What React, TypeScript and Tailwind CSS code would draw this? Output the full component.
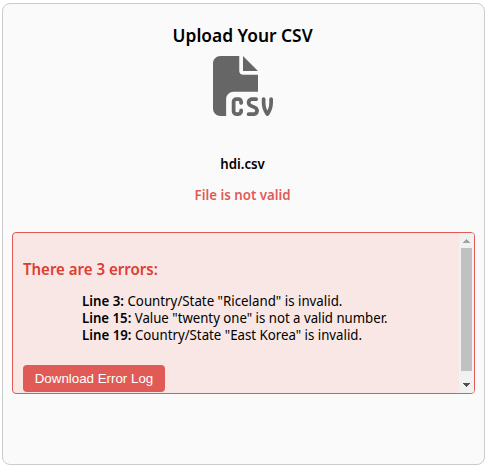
import { FaFileCsv } from "react-icons/fa6";

const errors = [
  { line: 3, message: 'Country/State "Riceland" is invalid.', scale: "scale-x-[0.949]" },
  { line: 15, message: 'Value "twenty one" is not a valid number.', scale: "scale-x-[0.943]" },
  { line: 19, message: 'Country/State "East Korea" is invalid.', scale: "scale-x-[0.946]" },
];

function Scrollbar() {
  return (
    <div className="flex w-[15px] shrink-0 flex-col items-center bg-[#f1f1f1]">
      <svg className="h-[15px] w-[15px] shrink-0" viewBox="0 0 15 15" shapeRendering="crispEdges">
        <path d="M7 6h1v1h1v1h1v1h1v1H4V9h1V8h1V7h1z" fill="#a3a3a3" />
      </svg>
      <div className="h-[123px] w-[11px] bg-[#c1c1c1]" />
      <svg className="mt-auto h-[15px] w-[15px] shrink-0" viewBox="0 0 15 15" shapeRendering="crispEdges">
        <path d="M4 5h7v1h-1v1H9v1H8v1H7V8H6V7H5V6H4z" fill="#505050" />
      </svg>
    </div>
  );
}

export default function App() {
  return (
    <div className="h-[466px] w-[488px] bg-white pl-[2px] pt-[3px] font-['Noto_Sans',sans-serif] text-black">
      <main className="flex h-[462px] w-[483px] flex-col items-center rounded-[8px] border border-[#cccccc] bg-[#fafafa] pt-[19px]">
        <h1 className="mr-px h-6 scale-x-[0.965] whitespace-nowrap text-[18px] font-semibold leading-6">Upload Your CSV</h1>
        <FaFileCsv className="mr-px mt-[9px] size-[60px] shrink-0 text-[#666666]" />
        <p className="mr-px mt-[38px] h-5 scale-x-[0.945] whitespace-nowrap text-[14px] font-semibold leading-5">hdi.csv</p>
        <p className="mr-px mt-[11px] h-5 scale-x-[0.95] whitespace-nowrap text-[14px] font-semibold leading-5 text-[#e15b56]">File is not valid</p>
        <section className="mt-[27px] flex h-[162px] w-[463px] shrink-0 overflow-hidden rounded-[4px] border border-[#e15b56] bg-[#f8e7e5]">
          <div className="flex min-w-0 flex-1 flex-col items-start pl-[10px] pt-[25px]">
            <h2 className="h-[22px] origin-left scale-x-[0.938] whitespace-nowrap text-[16px] font-semibold leading-[22px] text-[#e03c31]">There are 3 errors:</h2>
            <ul className="mt-3 flex flex-col items-start pl-[59px] text-[14px] leading-[17px]">
              {errors.map((e) => (
                <li key={e.line} className={`h-[17px] origin-left whitespace-nowrap ${e.scale}`}>
                  <strong className="font-semibold">Line {e.line}:</strong> {e.message}
                </li>
              ))}
            </ul>
            <button className="mt-[22px] h-[27px] w-[142px] shrink-0 whitespace-nowrap rounded-[4px] bg-[#e15b56] font-['Liberation_Sans',Arial,sans-serif] text-[13.333px] leading-[27px] text-white">
              Download Error Log
            </button>
          </div>
          <Scrollbar />
        </section>
      </main>
    </div>
  );
}
